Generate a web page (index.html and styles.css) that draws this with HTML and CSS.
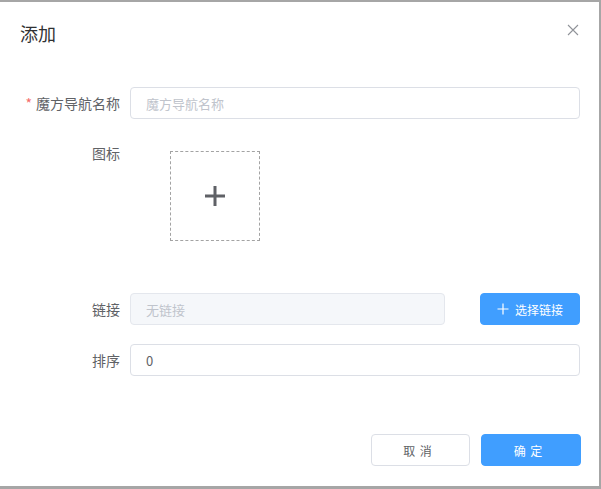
FILE: index.html
```html
<!doctype html>
<html lang="zh-CN">

<head>
    <meta charset="utf-8">
    <meta name="viewport" content="width=device-width, initial-scale=1">
    <title>添加</title>
    <link rel="stylesheet" href="styles.css">
</head>

<body>
    <div class="dialog">
        <div class="dialog_header">
            <span class="dialog_title">添加</span>
            <button class="dialog_close" aria-label="关闭">
                <svg width="12" height="12" viewBox="0 0 12 12">
                    <path d="M1 1L11 11M11 1L1 11" stroke="#909399" stroke-width="1.1" fill="none" />
                </svg>
            </button>
        </div>

        <div class="dialog_body">
            <div class="form_row row_name">
                <label class="form_label"><span class="required">*</span>魔方导航名称</label>
                <div class="form_content">
                    <input class="text_input" type="text" placeholder="魔方导航名称">
                </div>
            </div>

            <div class="form_row row_icon">
                <label class="form_label">图标</label>
                <div class="form_content">
                    <div class="upload_box">
                        <svg width="22" height="22" viewBox="0 0 22 22">
                            <path d="M11 1V21M1 11H21" stroke="#5f6166" stroke-width="3" fill="none" />
                        </svg>
                    </div>
                </div>
            </div>

            <div class="form_row row_link">
                <label class="form_label">链接</label>
                <div class="form_content">
                    <input class="text_input link_input" type="text" placeholder="无链接" disabled>
                    <button class="btn btn_primary btn_pick">
                        <svg width="12" height="12" viewBox="0 0 12 12">
                            <path d="M6 0.5V11.5M0.5 6H11.5" stroke="#fff" stroke-width="1.2" fill="none" />
                        </svg>
                        <span>选择链接</span>
                    </button>
                </div>
            </div>

            <div class="form_row row_sort">
                <label class="form_label">排序</label>
                <div class="form_content">
                    <input class="text_input" type="text" value="0">
                </div>
            </div>
        </div>

        <div class="dialog_footer">
            <button class="btn btn_plain">取 消</button>
            <button class="btn btn_primary">确 定</button>
        </div>
    </div>
</body>

</html>
```

FILE: styles.css
```css
/* Dialog over a grey mask */
body {
    margin: 0;
    padding: 2px 2px 3px 0;
    background-color: #a6a6a6;
    font-family: "Noto Sans CJK SC", "Noto Sans", sans-serif;
    font-size: 14px;
    color: #606266;
}

.dialog {
    background-color: #fff;
    width: 599px;
    height: 484px;
    display: flex;
    flex-direction: column;
    box-sizing: border-box;
}

.dialog_header {
    padding: 19px 18px 0 20px;
    display: flex;
    justify-content: space-between;
    align-items: center;
}

.dialog_title {
    font-size: 18px;
    line-height: 24px;
    color: #303133;
}

.dialog_close {
    border: none;
    background: none;
    padding: 0;
    width: 16px;
    height: 16px;
    margin-top: -6px;
    display: flex;
    align-items: center;
    justify-content: center;
    cursor: pointer;
}

.dialog_body {
    padding: 42px 19px 0 20px;
}

.form_row {
    display: flex;
    align-items: flex-start;
}

.form_label {
    width: 110px;
    padding-right: 10px;
    box-sizing: border-box;
    text-align: right;
    line-height: 32px;
    flex-shrink: 0;
}

.required {
    color: #f56c6c;
    margin-right: 4px;
}

.form_content {
    flex: 1;
    display: flex;
    align-items: center;
}

.row_name {
    margin-bottom: 18px;
}

.row_icon {
    margin-bottom: 52px;
}

.row_link {
    margin-bottom: 19px;
}

.text_input {
    width: 100%;
    height: 32px;
    box-sizing: border-box;
    border: 1px solid #dcdfe6;
    border-radius: 4px;
    padding: 0 15px;
    font-family: inherit;
    font-size: 13px;
    color: #606266;
    outline: none;
}

.text_input::placeholder {
    color: #c0c4cc;
}

.link_input {
    width: 315px;
    background-color: #f5f7fa;
    border-color: #e4e7ed;
}

.upload_box {
    width: 90px;
    height: 90px;
    box-sizing: border-box;
    border: 1px dashed #a3a3a3;
    margin: 14px 0 0 40px;
    display: flex;
    align-items: center;
    justify-content: center;
}

.btn {
    height: 32px;
    width: 100px;
    border-radius: 4px;
    font-family: inherit;
    font-size: 12px;
    cursor: pointer;
    display: flex;
    align-items: center;
    justify-content: center;
    box-sizing: border-box;
}

.btn_primary {
    background-color: #409eff;
    border: 1px solid #409eff;
    color: #fff;
}

.btn_plain {
    width: 99px;
    background-color: #fff;
    border: 1px solid #dcdfe6;
    color: #606266;
}

.dialog_footer .btn {
    letter-spacing: 1px;
    padding-left: 1px;
}

.btn_pick {
    margin-left: auto;
    gap: 6px;
}

.dialog_footer {
    margin-top: auto;
    padding: 0 18px 20px 20px;
    display: flex;
    justify-content: flex-end;
    gap: 11px;
}
```
